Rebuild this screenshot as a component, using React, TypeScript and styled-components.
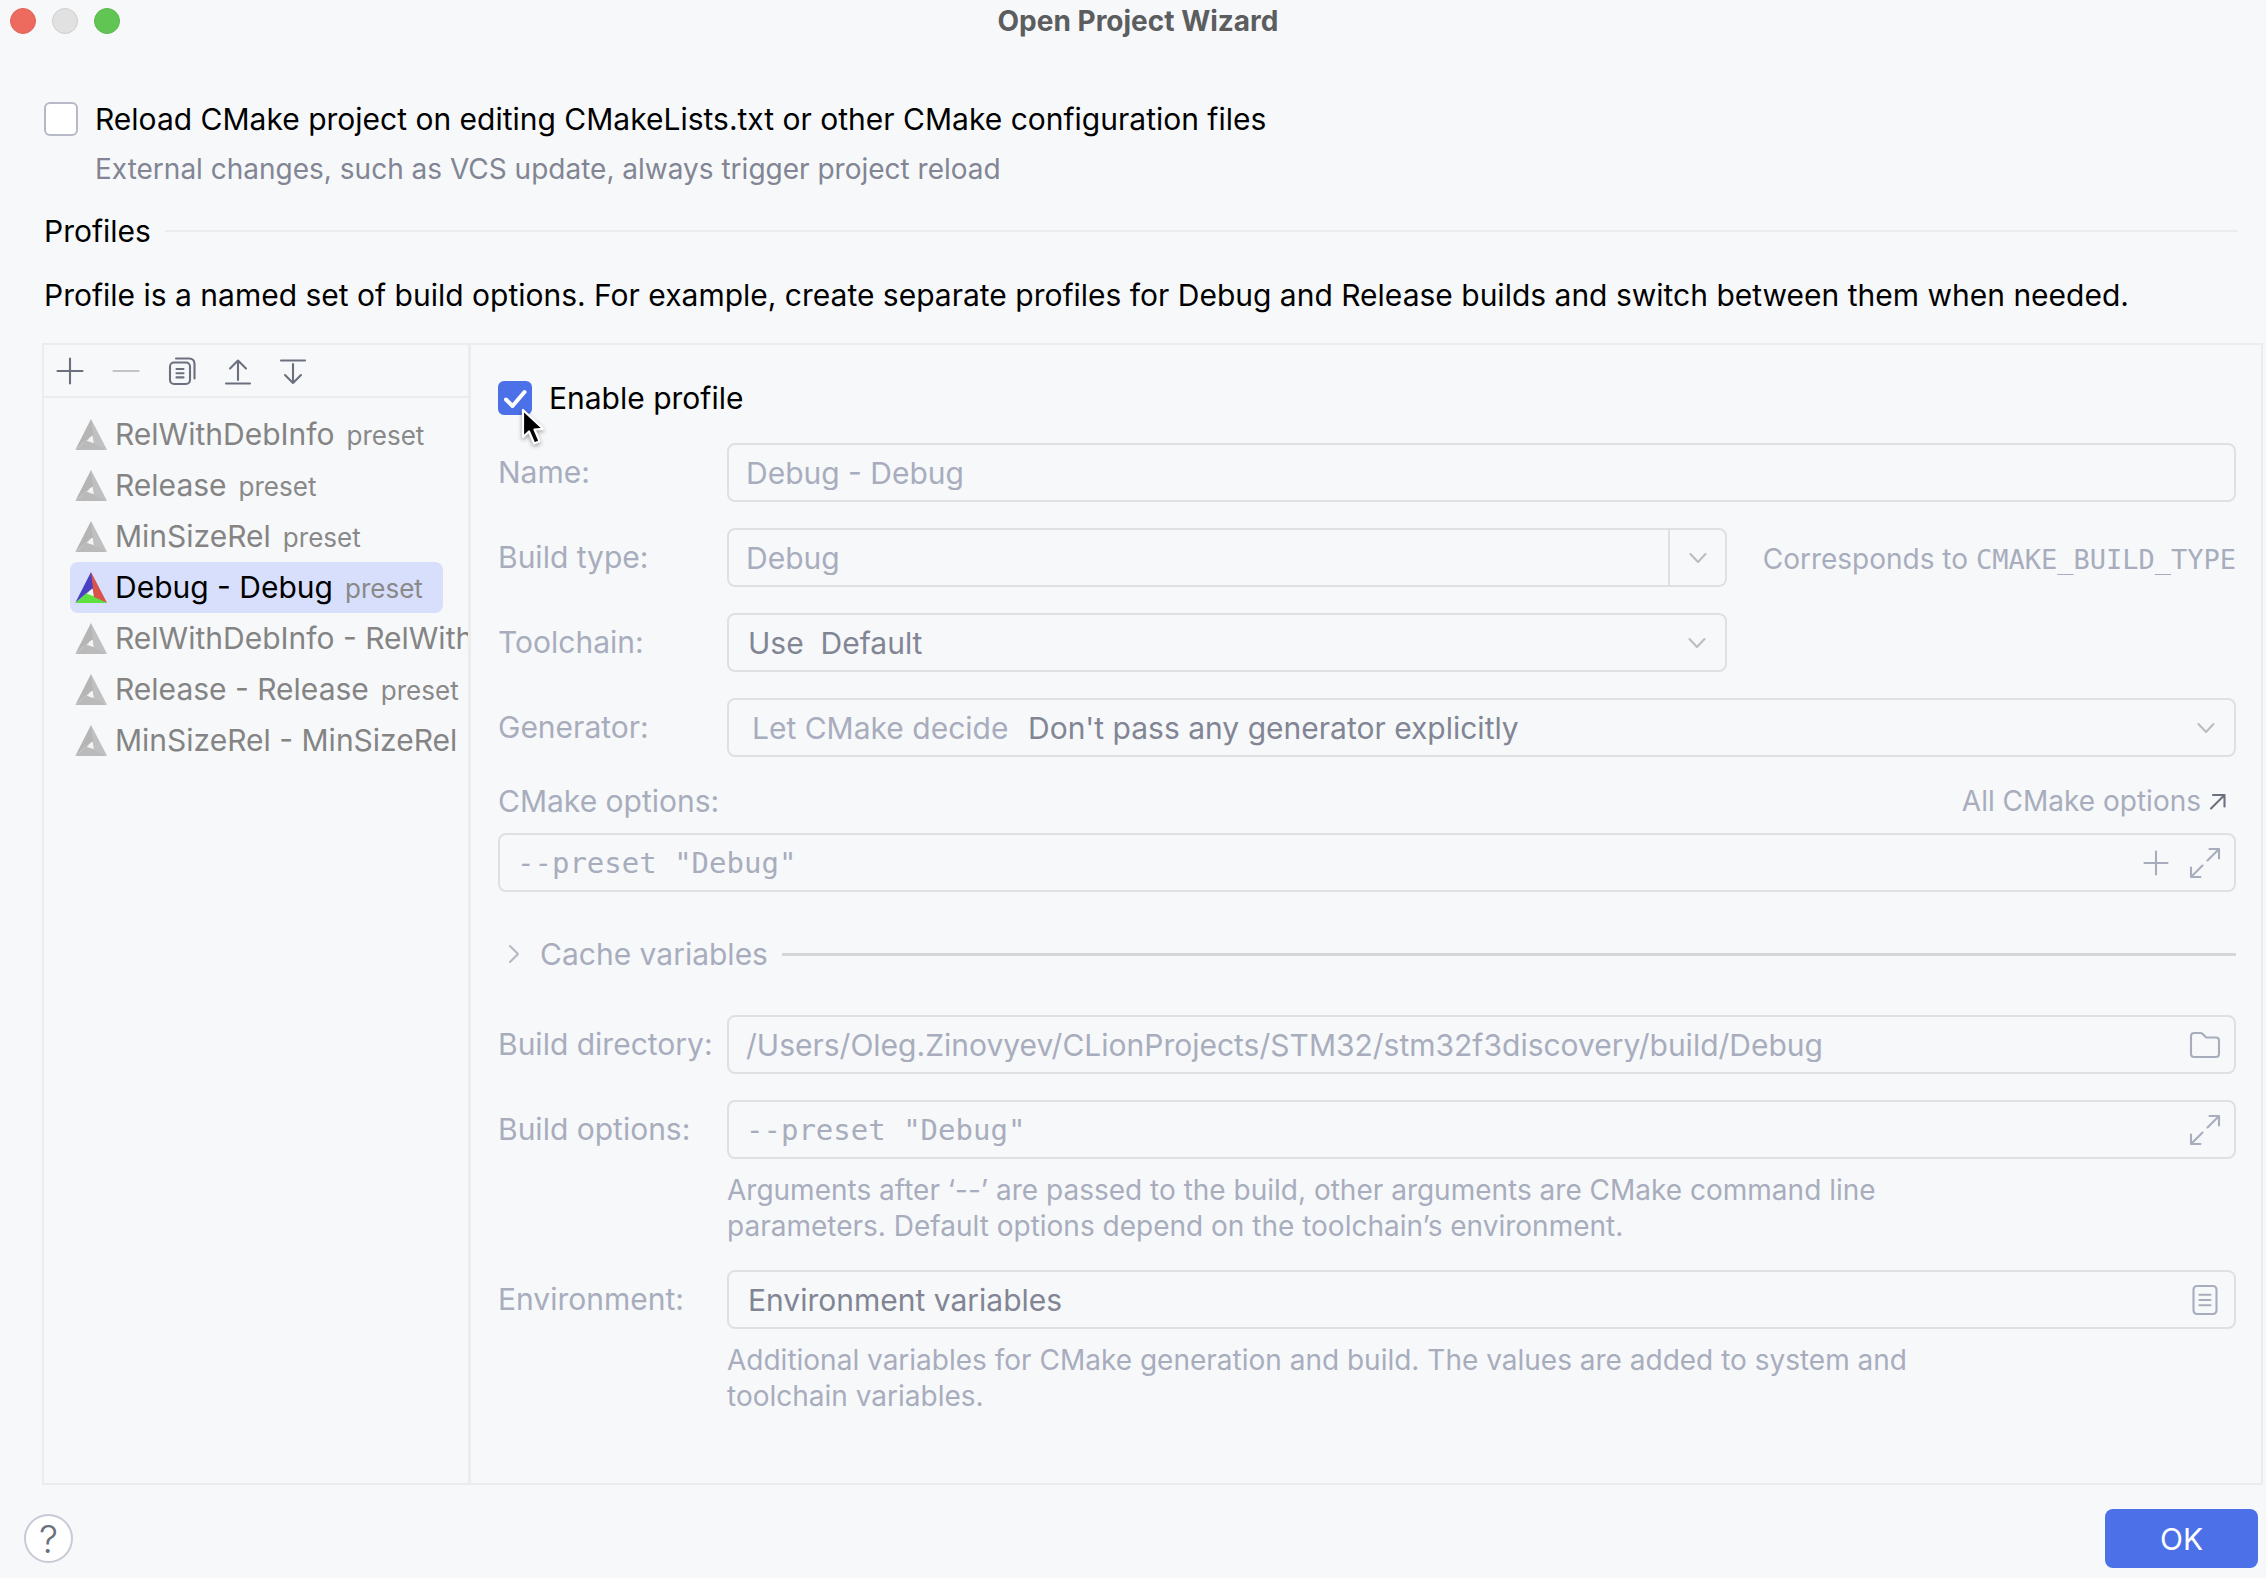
import React from "react";
import styled, { createGlobalStyle, css } from "styled-components";

const color = {
  bg: "#f7f8fa",
  text: "#000000",
  muted: "#a8adbd",
  dim: "#818594",
  line: "#ebecee",
  field: "#dfe0e3",
  icon: "#6c707e",
  accent: "#4c70e8",
  selected: "#d8dffc",
};

const mono = `"DejaVu Sans Mono", "Liberation Mono", monospace`;

const GlobalStyle = createGlobalStyle`
  *, *::before, *::after { box-sizing: border-box; }
  body { margin: 0; background: #ffffff; }
  body, input, select, button {
    font-family: Inter, "Liberation Sans", sans-serif;
    font-size: 30px;
    line-height: 34px;
    color: ${color.text};
  }
`;

const Window = styled.main`
  min-height: calc(100vh - 2px);
  display: flex;
  flex-direction: column;
  background: ${color.bg};
`;

const TitleBar = styled.header`
  height: 42px;
  display: grid;
  grid-template-columns: 1fr auto 1fr;
  align-items: center;
  padding: 0 0 0 10px;
`;

const Lights = styled.div`
  display: flex;
  gap: 16px;
`;

const Light = styled.button<{ $fill: string; $edge: string }>`
  width: 26px;
  height: 26px;
  padding: 0;
  border-radius: 50%;
  border: 1px solid ${(p) => p.$edge};
  background: ${(p) => p.$fill};
`;

const Title = styled.h1`
  margin: 0;
  font-size: 28px;
  line-height: 34px;
  font-weight: 700;
  color: #5c5d5f;
`;

const Intro = styled.section`
  display: flex;
  flex-direction: column;
  padding: 60px 28px 31px 44px;
`;

const CheckLabel = styled.label`
  display: flex;
  align-items: center;
  gap: 17px;
`;

const CheckWrap = styled.span`
  position: relative;
  display: block;
  width: 34px;
  height: 34px;
  flex: none;
`;

const CheckBox = styled.input`
  appearance: none;
  display: block;
  width: 34px;
  height: 34px;
  margin: 0;
  border: 2px solid #b7b9c8;
  border-radius: 6px;
  background: #ffffff;
  &:checked {
    border-color: ${color.accent};
    background: ${color.accent};
  }
`;

const CheckMark = styled.svg`
  position: absolute;
  inset: 0;
  pointer-events: none;
`;

const Pointer = styled.svg`
  position: absolute;
  left: 22px;
  top: 25px;
  pointer-events: none;
  filter: drop-shadow(0 2px 2px rgba(0, 0, 0, 0.35));
`;

const CheckHint = styled.p`
  margin: 15px 0 27px 51px;
  font-size: 28px;
  line-height: 36px;
  color: ${color.dim};
`;

const SectionHead = styled.div`
  display: flex;
  align-items: center;
  gap: 14px;
`;

const SectionTitle = styled.h2`
  margin: 0;
  font-size: 30px;
  line-height: 34px;
  font-weight: 400;
`;

const Rule = styled.hr<{ $dark?: boolean }>`
  flex: 1;
  height: ${(p) => (p.$dark ? 3 : 2)}px;
  margin: 0;
  border: 0;
  background: ${(p) => (p.$dark ? "#d6d6d8" : color.line)};
`;

const Description = styled.p`
  margin: 30px 0 0;
`;

const Panel = styled.section`
  flex: 1;
  display: grid;
  grid-template-columns: 427px minmax(0, 1fr);
  margin: 0 3px 0 42px;
  border: 2px solid ${color.line};
`;

const Sidebar = styled.div`
  min-width: 0;
  border-right: 3px solid ${color.line};
`;

const Toolbar = styled.div`
  height: 53px;
  display: flex;
  align-items: center;
  gap: 22px;
  padding: 0 9px;
  border-bottom: 2px solid ${color.line};
`;

const IconButton = styled.button`
  width: 34px;
  height: 34px;
  padding: 0;
  border: 0;
  background: none;
  flex: none;
  svg {
    display: block;
  }
`;

const ProfileList = styled.ul`
  margin: 0;
  padding: 11px 0 0 26px;
  list-style: none;
`;

const ProfileItem = styled.li<{ $selected?: boolean }>`
  height: 51px;
  display: flex;
  align-items: center;
  gap: 8px;
  padding-left: 5px;
  overflow: hidden;
  white-space: nowrap;
  color: #848484;
  ${(p) =>
    p.$selected &&
    css`
      margin-right: 25px;
      border-radius: 8px;
      color: ${color.text};
      background: ${color.selected};
    `}
  svg {
    flex: none;
  }
`;

const Preset = styled.small`
  margin-left: 12px;
  font-size: 26px;
  color: #898989;
`;

const Form = styled.form`
  display: flex;
  flex-direction: column;
  padding: 36px 25px 68px 27px;
`;

const Rows = styled.div<{ $top: number }>`
  display: flex;
  flex-direction: column;
  gap: 26px;
  margin-top: ${(p) => p.$top}px;
`;

const Row = styled.div`
  display: grid;
  grid-template-columns: 229px minmax(0, 1fr);
`;

const Label = styled.label`
  align-self: start;
  line-height: 59px;
  white-space: nowrap;
  color: ${color.muted};
`;

const Split = styled.div`
  display: grid;
  grid-template-columns: minmax(0, 1fr) 474px;
  align-items: center;
  column-gap: 35px;
`;

const Field = styled.div`
  height: 59px;
  display: flex;
  align-items: center;
  border: 2px solid ${color.field};
  border-radius: 8px;
`;

const TextInput = styled.input<{ $mono?: boolean; $dim?: boolean }>`
  flex: 1;
  min-width: 0;
  align-self: stretch;
  padding: 0 ${(p) => (p.$dim ? 19 : 17)}px;
  border: 0;
  outline: 0;
  background: none;
  color: ${(p) => (p.$dim ? color.dim : color.muted)};
  ${(p) =>
    p.$mono &&
    css`
      font-family: ${mono};
      font-size: 29px;
    `}
`;

const Select = styled.select<{ $muted?: boolean }>`
  appearance: none;
  align-self: stretch;
  padding: 0 0 0 ${(p) => (p.$muted ? 23 : 19)}px;
  flex: ${(p) => (p.$muted ? "none" : "1")};
  border: 0;
  background: none;
  opacity: 1;
  color: ${(p) => (p.$muted ? color.muted : color.dim)};
`;

const SelectNote = styled.span`
  flex: 1;
  margin-left: 19px;
  color: ${color.dim};
`;

const Arrow = styled.span`
  width: 56px;
  display: grid;
  place-items: center;
`;

const ArrowButton = styled.button`
  width: 57px;
  align-self: stretch;
  display: grid;
  place-items: center;
  padding: 0;
  border: 0;
  border-left: 2px solid ${color.field};
  background: none;
`;

const FieldActions = styled.div`
  display: flex;
  gap: 15px;
  padding-right: 12px;
`;

const Note = styled.span`
  padding-top: 4px;
  font-size: 28px;
  white-space: nowrap;
  text-align: right;
  color: ${color.muted};
  code {
    font-family: ${mono};
    font-size: 27px;
  }
`;

const Help = styled.p`
  grid-column: 2;
  max-width: 1180px;
  margin: 13px 0 0;
  font-size: 28px;
  line-height: 36px;
  color: ${color.muted};
`;

const OptionsHead = styled.div`
  display: flex;
  justify-content: space-between;
  align-items: center;
  margin: 27px 0 15px;
  color: ${color.muted};
`;

const DocLink = styled.a`
  display: flex;
  align-items: center;
  gap: 8px;
  padding-right: 9px;
  font-size: 28px;
  color: ${color.muted};
  text-decoration: none;
`;

const CacheHead = styled.div`
  display: flex;
  align-items: center;
  gap: 14px;
  margin-top: 45px;
`;

const CacheToggle = styled.button`
  display: flex;
  align-items: center;
  gap: 20px;
  padding: 0 0 0 10px;
  border: 0;
  background: none;
  color: ${color.muted};
`;

const Footer = styled.footer`
  display: flex;
  justify-content: space-between;
  align-items: center;
  padding: 24px 8px 10px 24px;
`;

const HelpButton = styled.button`
  width: 49px;
  height: 49px;
  padding: 0;
  border: 2px solid #c9cad6;
  border-radius: 50%;
  background: #ffffff;
  color: ${color.icon};
  font-size: 38px;
  font-weight: 300;
`;

const OkButton = styled.button`
  width: 153px;
  height: 59px;
  padding: 0;
  border: 0;
  border-radius: 8px;
  background: ${color.accent};
  color: #ffffff;
`;

const Svg = ({ w, h, stroke, children }: { w: number; h: number; stroke: string; children: React.ReactNode }) => (
  <svg
    width={w}
    height={h}
    viewBox={`0 0 ${w} ${h}`}
    fill="none"
    stroke={stroke}
    strokeWidth="2.1"
    strokeLinecap="round"
    strokeLinejoin="round"
    aria-hidden="true"
  >
    {children}
  </svg>
);

const PlusIcon = ({ stroke = color.icon, r = 12.5 }: { stroke?: string; r?: number }) => (
  <Svg w={34} h={34} stroke={stroke}>
    <path d={`M17 ${17 - r}V${17 + r}M${17 - r} 17H${17 + r}`} />
  </Svg>
);

const MinusIcon = () => (
  <Svg w={34} h={34} stroke="#c3c4c8">
    <path d="M4.500 17H29.500" />
  </Svg>
);

const CopyIcon = () => (
  <Svg w={34} h={34} stroke={color.icon}>
    <rect x="5" y="8.500" width="20" height="21.500" rx="4" />
    <path d="M11 4.500H24Q29.500 4.500 29.500 10V24.500M11.500 15H18.500M11.500 19.200H18.500M11.500 23.400H18.500" />
  </Svg>
);

const UpIcon = () => (
  <Svg w={34} h={34} stroke={color.icon}>
    <path d="M17 6.500V26M9 14.500L17 6.500L25 14.500M5 29.500H29" />
  </Svg>
);

const DownIcon = () => (
  <Svg w={34} h={34} stroke={color.icon}>
    <path d="M16 29V10M8 21L16 29L24 21M4 6.500H28" />
  </Svg>
);

const ExpandIcon = () => (
  <Svg w={34} h={34} stroke={color.muted}>
    <path d="M21.500 3H31V12.500M31 3L19.500 14.500M3 21.500V31H12.500M3 31L14.500 19.500" />
  </Svg>
);

const FolderIcon = () => (
  <Svg w={34} h={34} stroke={color.muted}>
    <path d="M3 8Q3 5 6 5H12.500Q13.600 5 14.400 5.800L18.200 9.500H28Q31 9.500 31 12.500V26Q31 29 28 29H6Q3 29 3 26Z" />
  </Svg>
);

const ListIcon = () => (
  <Svg w={34} h={34} stroke={color.muted}>
    <rect x="5.500" y="3" width="23" height="28" rx="3.500" />
    <path d="M11.500 11.800H22.500M11.500 17H22.500M11.500 22.200H22.500" />
  </Svg>
);

const ChevronDown = () => (
  <Svg w={18} h={12} stroke="#bcbdc0">
    <path d="M1.500 2L9 10L16.500 2" />
  </Svg>
);

const ChevronRight = () => (
  <Svg w={12} h={20} stroke="#b6b9c5">
    <path d="M2 2L10 10L2 18" />
  </Svg>
);

const LinkArrow = () => (
  <Svg w={18} h={18} stroke={color.icon}>
    <path d="M4 3H15.500V14.500M15.500 3L2 16.500" />
  </Svg>
);

const CMakeIcon = ({ active }: { active?: boolean }) => {
  const [left, right, base] = active ? ["#4a40c4", "#d9534a", "#5ee040"] : ["#b5b5b5", "#c0c0c0", "#bababa"];
  return (
    <svg width="32" height="31" viewBox="0 0 96 93" aria-hidden="true">
      <path fill={base} d="M40 58L96 93H1Z" />
      <path fill={right} d="M48 0L96 92L57 75L48 40Z" />
      <path fill={left} d="M48 0L54 48L32 65L1 92Z" />
      <path fill="#f4f4f6" d="M53 50L56 73L35 65Z" />
    </svg>
  );
};

const profiles = [
  { name: "RelWithDebInfo" },
  { name: "Release" },
  { name: "MinSizeRel" },
  { name: "Debug - Debug", selected: true },
  { name: "RelWithDebInfo - RelWithDebInfo" },
  { name: "Release - Release" },
  { name: "MinSizeRel - MinSizeRel" },
];

export default function App() {
  return (
    <>
      <GlobalStyle />
      <Window>
        <TitleBar>
          <Lights>
            <Light type="button" aria-label="Close" $fill="#ec6a5e" $edge="#e06357" />
            <Light type="button" aria-label="Minimize" $fill="#e1e1e1" $edge="#cecece" />
            <Light type="button" aria-label="Zoom" $fill="#61c554" $edge="#58b94c" />
          </Lights>
          <Title>Open Project Wizard</Title>
        </TitleBar>

        <Intro>
          <CheckLabel>
            <CheckWrap>
              <CheckBox type="checkbox" />
            </CheckWrap>
            Reload CMake project on editing CMakeLists.txt or other CMake configuration files
          </CheckLabel>
          <CheckHint>External changes, such as VCS update, always trigger project reload</CheckHint>
          <SectionHead>
            <SectionTitle>Profiles</SectionTitle>
            <Rule />
          </SectionHead>
          <Description>
            Profile is a named set of build options. For example, create separate profiles for Debug and Release builds
            and switch between them when needed.
          </Description>
        </Intro>

        <Panel>
          <Sidebar>
            <Toolbar>
              <IconButton type="button" aria-label="Add"><PlusIcon /></IconButton>
              <IconButton type="button" aria-label="Remove" disabled><MinusIcon /></IconButton>
              <IconButton type="button" aria-label="Copy"><CopyIcon /></IconButton>
              <IconButton type="button" aria-label="Move up"><UpIcon /></IconButton>
              <IconButton type="button" aria-label="Move down"><DownIcon /></IconButton>
            </Toolbar>
            <ProfileList>
              {profiles.map((p) => (
                <ProfileItem key={p.name} $selected={p.selected}>
                  <CMakeIcon active={p.selected} />
                  <span>
                    {p.name}
                    <Preset>preset</Preset>
                  </span>
                </ProfileItem>
              ))}
            </ProfileList>
          </Sidebar>

          <Form>
            <CheckLabel>
              <CheckWrap>
                <CheckBox type="checkbox" defaultChecked />
                <CheckMark width="34" height="34" viewBox="0 0 34 34" fill="none" aria-hidden="true">
                  <path
                    d="M8 18.500L14.500 25L26.500 11"
                    stroke="#ffffff"
                    strokeWidth="4"
                    strokeLinecap="round"
                    strokeLinejoin="round"
                  />
                </CheckMark>
                <Pointer width="28" height="42" viewBox="0 0 28 42" aria-hidden="true">
                  <path
                    d="M3 4V31L9 25.500L14.200 37.500L19.600 35.200L14.500 23.500L23 22.800Z"
                    fill="#000000"
                    stroke="#ffffff"
                    strokeWidth="2.200"
                    strokeLinejoin="round"
                  />
                </Pointer>
              </CheckWrap>
              Enable profile
            </CheckLabel>

            <Rows $top={28}>
              <Row>
                <Label htmlFor="name">Name:</Label>
                <Field>
                  <TextInput id="name" defaultValue="Debug - Debug" disabled />
                </Field>
              </Row>
              <Row>
                <Label htmlFor="build-type">Build type:</Label>
                <Split>
                  <Field>
                    <TextInput id="build-type" defaultValue="Debug" disabled />
                    <ArrowButton type="button" aria-label="Show build types" disabled>
                      <ChevronDown />
                    </ArrowButton>
                  </Field>
                  <Note>
                    Corresponds to <code>CMAKE_BUILD_TYPE</code>
                  </Note>
                </Split>
              </Row>
              <Row>
                <Label htmlFor="toolchain">Toolchain:</Label>
                <Split>
                  <Field>
                    <Select id="toolchain" disabled>
                      <option>{"Use\u00a0 Default"}</option>
                    </Select>
                    <Arrow><ChevronDown /></Arrow>
                  </Field>
                </Split>
              </Row>
              <Row>
                <Label htmlFor="generator">Generator:</Label>
                <Field>
                  <Select id="generator" $muted disabled>
                    <option>Let CMake decide</option>
                  </Select>
                  <SelectNote>Don't pass any generator explicitly</SelectNote>
                  <Arrow><ChevronDown /></Arrow>
                </Field>
              </Row>
            </Rows>

            <OptionsHead>
              <label htmlFor="cmake-options">CMake options:</label>
              <DocLink href="#cmake-options">
                All CMake options <LinkArrow />
              </DocLink>
            </OptionsHead>
            <Field>
              <TextInput id="cmake-options" $mono defaultValue={'--preset "Debug"'} disabled />
              <FieldActions>
                <IconButton type="button" aria-label="Add option" disabled>
                  <PlusIcon stroke={color.muted} r={11.5} />
                </IconButton>
                <IconButton type="button" aria-label="Expand options" disabled><ExpandIcon /></IconButton>
              </FieldActions>
            </Field>

            <CacheHead>
              <CacheToggle type="button" aria-expanded="false" disabled>
                <ChevronRight />
                Cache variables
              </CacheToggle>
              <Rule $dark />
            </CacheHead>

            <Rows $top={44}>
              <Row>
                <Label htmlFor="build-dir">Build directory:</Label>
                <Field>
                  <TextInput
                    id="build-dir"
                    defaultValue="/Users/Oleg.Zinovyev/CLionProjects/STM32/stm32f3discovery/build/Debug"
                    disabled
                  />
                  <FieldActions>
                    <IconButton type="button" aria-label="Browse" disabled><FolderIcon /></IconButton>
                  </FieldActions>
                </Field>
              </Row>
              <Row>
                <Label htmlFor="build-options">Build options:</Label>
                <Field>
                  <TextInput id="build-options" $mono defaultValue={'--preset "Debug"'} disabled />
                  <FieldActions>
                    <IconButton type="button" aria-label="Expand build options" disabled><ExpandIcon /></IconButton>
                  </FieldActions>
                </Field>
                <Help>
                  Arguments after ‘--’ are passed to the build, other arguments are CMake command line parameters.
                  Default options depend on the toolchain’s environment.
                </Help>
              </Row>
              <Row>
                <Label htmlFor="environment">Environment:</Label>
                <Field>
                  <TextInput id="environment" $dim defaultValue="Environment variables" disabled />
                  <FieldActions>
                    <IconButton type="button" aria-label="Edit variables" disabled><ListIcon /></IconButton>
                  </FieldActions>
                </Field>
                <Help>
                  Additional variables for CMake generation and build. The values are added to system and toolchain
                  variables.
                </Help>
              </Row>
            </Rows>
          </Form>
        </Panel>

        <Footer>
          <HelpButton type="button" aria-label="Help">?</HelpButton>
          <OkButton type="button">OK</OkButton>
        </Footer>
      </Window>
    </>
  );
}
